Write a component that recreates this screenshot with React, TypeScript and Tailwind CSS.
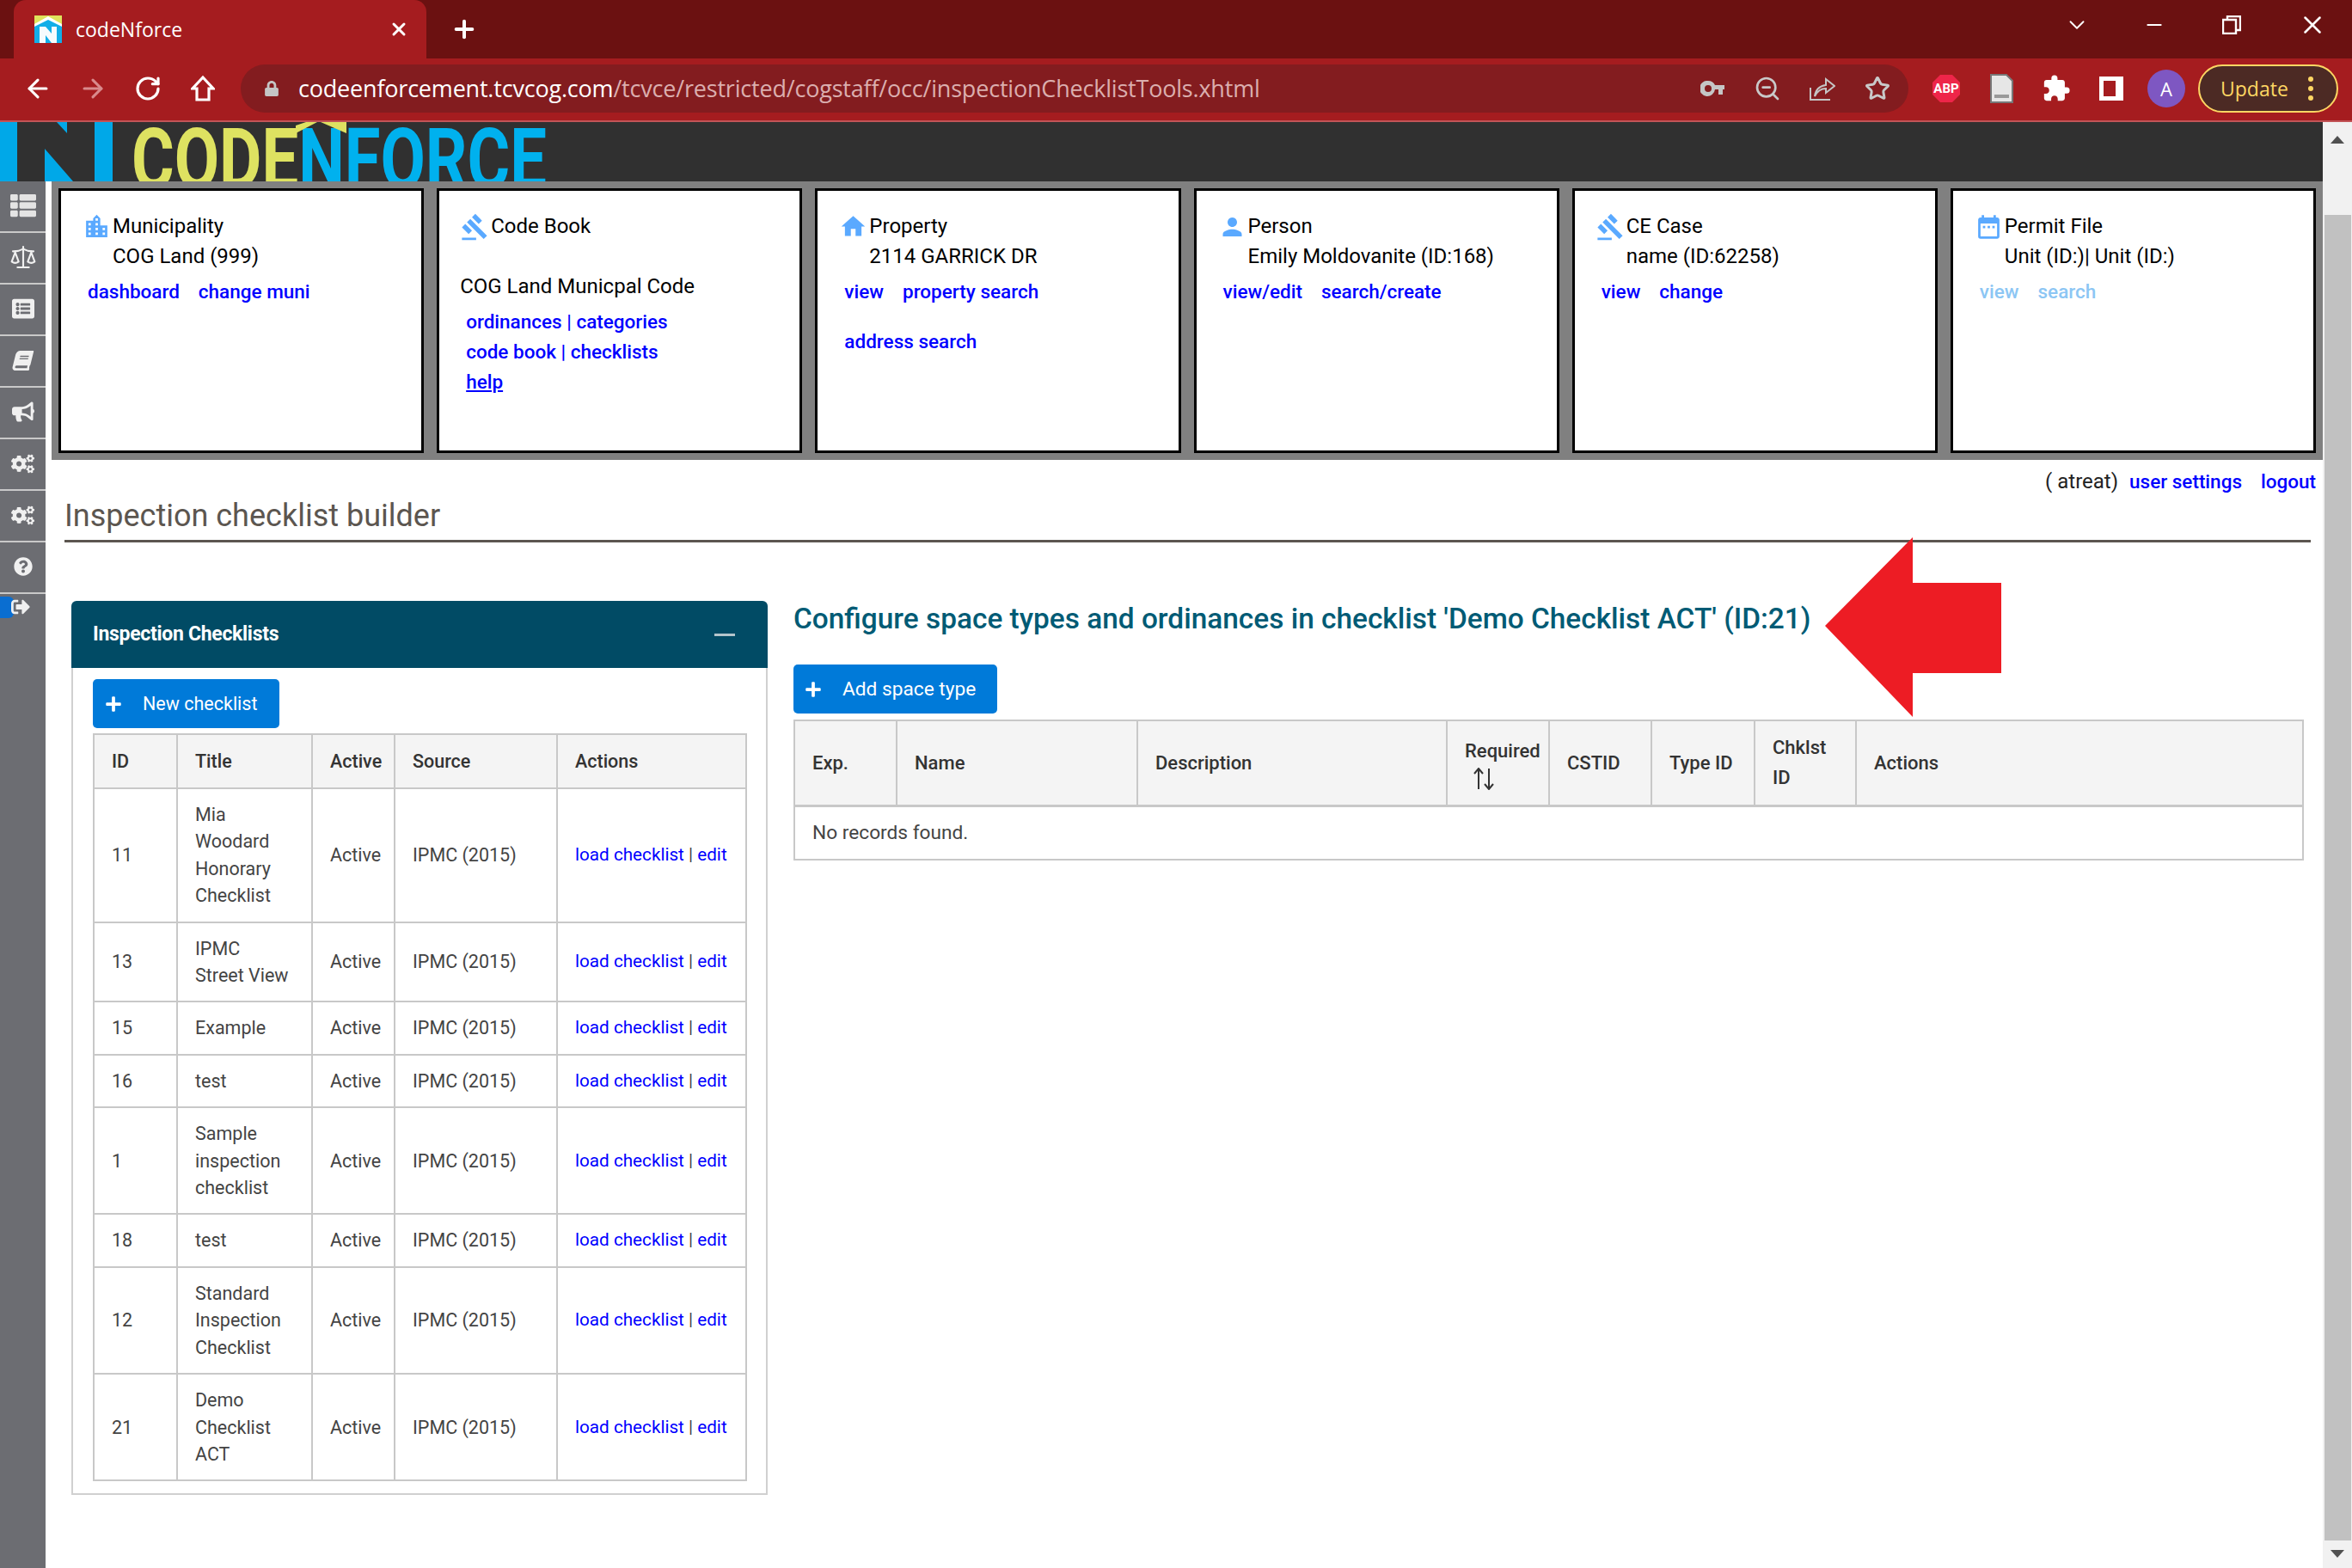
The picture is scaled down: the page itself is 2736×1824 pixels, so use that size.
import { ArrowLeft, ArrowRight, ChevronDown, Minus, Plus, RotateCw, Scale, Star, X, ZoomOut } from "lucide-react";
import {
    FaBook,
    FaBullhorn,
    FaCogs,
    FaListAlt,
    FaLock,
    FaPlus,
    FaQuestionCircle,
    FaSignOutAlt,
    FaThList,
} from "react-icons/fa";
import { MdDateRange, MdExtension, MdGavel, MdHome, MdLocationCity, MdPerson } from "react-icons/md";
import type { ReactNode } from "react";

const rows = [
    { id: "11", title: ["Mia", "Woodard", "Honorary", "Checklist"] },
    { id: "13", title: ["IPMC", "Street View"] },
    { id: "15", title: ["Example"] },
    { id: "16", title: ["test"] },
    { id: "1", title: ["Sample", "inspection", "checklist"] },
    { id: "18", title: ["test"] },
    { id: "12", title: ["Standard", "Inspection", "Checklist"] },
    { id: "21", title: ["Demo", "Checklist", "ACT"] },
];

const sideIcons = [
    <FaThList size={30} className="text-[#e4e4e4]" />,
    <Scale size={32} strokeWidth={1.6} />,
    <FaListAlt size={26} />,
    <FaBook size={23} className="-skew-x-[14deg]" />,
    <FaBullhorn size={26} />,
    <FaCogs size={27} />,
    <FaCogs size={27} />,
    <FaQuestionCircle size={22} />,
];

const Favicon = () => (
    <svg width="32" height="32" viewBox="0 0 32 32">
        <rect width="32" height="11" fill="#dfe35c" />
        <path d="M0 10 16 1 32 10V14H0Z" fill="#fff" />
        <path d="M0 13 16 5 32 13V32H0Z" fill="#12aee8" />
        <path d="M6 13H13L20 21V13H26V32H20L13 23V32H6Z" fill="#f6fbfd" />
    </svg>
);

const LogoMark = () => (
    <svg width="131" height="69" viewBox="0 0 131 69" className="shrink-0">
        <path d="M0 0H20V69H0ZM110 0H131V69H110ZM66 0H78V13ZM52 31 85 69H52Z" fill="#00a8e8" />
    </svg>
);

const Header = () => (
    <div className="relative h-[69px] overflow-hidden bg-[#303030]">
        <div className="flex h-full">
            <LogoMark />
            <div className="ml-[22px] mt-[-6px] origin-left scale-x-[0.775] whitespace-nowrap font-[Roboto,sans-serif] text-[98px] font-bold leading-[100px]">
                <span className="text-[#dee261]">CODE</span>
                <span className="text-[#00b1ee]">NFORCE</span>
            </div>
        </div>
        <svg width="59" height="14" viewBox="0 0 59 14" className="absolute left-[344px] top-0">
            <path d="M0 13V4L12 0H25ZM29 0H59V13Z" fill="#dee261" />
        </svg>
    </div>
);

const Sidebar = () => (
    <div className="flex w-[53px] shrink-0 flex-col bg-[#6c6d72] text-[#f0f0f0]">
        {sideIcons.map((icon, i) => (
            <div key={i} className="flex h-[60px] items-center justify-center border-b-2 border-[#c9c9c9] pb-[2px]">
                {icon}
            </div>
        ))}
        <div className="relative h-[30px]">
            <div className="absolute left-0 top-[3px] h-[25px] w-[16px] rounded-r-[6px] bg-[#0a6ed1]" />
            <FaSignOutAlt size={22} className="absolute left-[13px] top-[4px]" />
        </div>
    </div>
);

const CardTitle = ({ icon, title, sub }: { icon: ReactNode; title: string; sub?: string }) => (
    <>
        <div className="flex items-center">
            <div className="flex h-[35px] w-[33px] shrink-0 items-center justify-center text-[#5aa9ff]">{icon}</div>
            <span className="ml-[2px]">{title}</span>
        </div>
        {sub && <div className="ml-[35px]">{sub}</div>}
    </>
);

const NavLinks = ({ items, pale, indent = "ml-[6px]" }: { items: string[]; pale?: boolean; indent?: string }) => (
    <div className={`${indent} mt-[6px] flex gap-[22px] text-[22.5px] font-medium ${pale ? "text-[#8cc6f4]" : "text-[#0000ff]"}`}>
        {items.map((item) => (
            <span key={item}>{item}</span>
        ))}
    </div>
);

const Card = ({ children }: { children: ReactNode }) => (
    <div className="flex-1 border-[3px] border-black bg-white pl-[25px] pt-[24px]">{children}</div>
);

const CardStrip = () => (
    <div className="flex h-[324px] gap-[15px] bg-[#808080] p-[8px] font-[Roboto,sans-serif] text-[24px] leading-[35px] text-black">
        <Card>
            <CardTitle icon={<MdLocationCity size={33} />} title="Municipality" sub="COG Land (999)" />
            <NavLinks items={["dashboard", "change muni"]} />
        </Card>
        <Card>
            <CardTitle icon={<MdGavel size={36} />} title="Code Book" />
            <div className="ml-[-1px] mt-[35px]">COG Land Municpal Code</div>
            <NavLinks items={["ordinances | categories"]} indent="ml-[6px]" />
            <div className="ml-[6px] text-[22.5px] font-medium text-[#0000ff]">code book | checklists</div>
            <div className="ml-[6px] text-[22.5px] font-medium text-[#0000ff] underline">help</div>
        </Card>
        <Card>
            <CardTitle icon={<MdHome size={35} />} title="Property" sub="2114 GARRICK DR" />
            <NavLinks items={["view", "property search"]} />
            <div className="ml-[6px] mt-[23px] text-[22.5px] font-medium text-[#0000ff]">address search</div>
        </Card>
        <Card>
            <CardTitle icon={<MdPerson size={36} />} title="Person" sub="Emily Moldovanite (ID:168)" />
            <NavLinks items={["view/edit", "search/create"]} />
        </Card>
        <Card>
            <CardTitle icon={<MdGavel size={38} />} title="CE Case" sub="name (ID:62258)" />
            <NavLinks items={["view", "change"]} />
        </Card>
        <Card>
            <CardTitle icon={<MdDateRange size={36} />} title="Permit File" sub="Unit (ID:)| Unit (ID:)" />
            <NavLinks items={["view", "search"]} pale />
        </Card>
    </div>
);

const PrimaryButton = ({ label, width, textClass, plusLeft }: { label: string; width: string; textClass: string; plusLeft: string }) => (
    <button className={`flex h-[57px] ${width} items-center rounded-[5px] bg-[#007ad9] text-white ${plusLeft}`}>
        <FaPlus size={20} className="shrink-0" />
        <span className={`ml-[24px] ${textClass}`}>{label}</span>
    </button>
);

const ChecklistPanel = () => (
    <div className="h-[1039px] w-[810px] shrink-0">
        <div className="flex h-[78px] items-center justify-between rounded-t-[6px] bg-[#014b65] pl-[25px] pr-[38px] text-[23px] font-bold text-white">
            <span className="tracking-[-0.3px]">Inspection Checklists</span>
            <span className="h-[3px] w-[24px] bg-[#b4c5cc]" />
        </div>
        <div className="border-2 border-t-0 border-[#d0d0d0] pb-[14px] pl-[23px] pr-[24px] pt-[13px]">
            <PrimaryButton label="New checklist" width="w-[217px]" textClass="text-[21.5px]" plusLeft="pl-[14px]" />
            <table className="mt-[6px] w-[759px] table-fixed border-collapse border-2 border-[#c8c8c8] text-[21.5px] leading-[31.4px]">
                <colgroup>
                    <col className="w-[97px]" />
                    <col className="w-[157px]" />
                    <col className="w-[96px]" />
                    <col className="w-[189px]" />
                    <col className="w-[220px]" />
                </colgroup>
                <thead>
                    <tr className="h-[63px] bg-[#f4f4f4] font-medium text-[#333]">
                        {["ID", "Title", "Active", "Source", "Actions"].map((h) => (
                            <th key={h} className="border-2 border-[#c8c8c8] pl-[20px] text-left font-medium">
                                {h}
                            </th>
                        ))}
                    </tr>
                </thead>
                <tbody className="text-[#444]">
                    {rows.map((row) => (
                        <tr key={row.id}>
                            <td className="border-2 border-[#c8c8c8] pl-[20px]">{row.id}</td>
                            <td className="border-2 border-[#c8c8c8] py-[14px] pl-[20px]">
                                {row.title.map((line) => (
                                    <div key={line}>{line}</div>
                                ))}
                            </td>
                            <td className="border-2 border-[#c8c8c8] pl-[20px]">Active</td>
                            <td className="border-2 border-[#c8c8c8] pl-[20px]">IPMC (2015)</td>
                            <td className="whitespace-nowrap border-2 border-[#c8c8c8] pl-[20px] text-[20.7px]">
                                <span className="text-[#0000ff]">load checklist</span> | <span className="text-[#0000ff]">edit</span>
                            </td>
                        </tr>
                    ))}
                </tbody>
            </table>
        </div>
    </div>
);

const SortIcon = () => (
    <svg width="28" height="26" viewBox="0 0 28 26" fill="none" stroke="#333" strokeWidth="2">
        <path d="M8 25V2M3 7 8 1 13 7M20 1V24M15 19 20 25 25 19" />
    </svg>
);

const SpaceTypes = () => (
    <div className="relative w-[1757px] shrink-0">
        <h2 className="h-[42px] whitespace-nowrap text-[33.4px] font-medium leading-[42px] text-[#005b75]">
            Configure space types and ordinances in checklist 'Demo Checklist ACT' (ID:21)
        </h2>
        <div className="mt-[32px]">
            <PrimaryButton label="Add space type" width="w-[237px]" textClass="text-[22.7px]" plusLeft="pl-[13px]" />
        </div>
        <table className="mt-[7px] w-full table-fixed border-collapse border-2 border-[#c8c8c8] leading-[35px]">
            <colgroup>
                <col className="w-[119px]" />
                <col className="w-[280px]" />
                <col className="w-[360px]" />
                <col className="w-[119px]" />
                <col className="w-[119px]" />
                <col className="w-[120px]" />
                <col className="w-[118px]" />
                <col />
            </colgroup>
            <thead>
                <tr className="h-[99px] bg-[#f4f4f4] text-left text-[#333]">
                    {["Exp.", "Name", "Description"].map((h) => (
                        <th key={h} className="border-2 border-b-[3px] border-[#c8c8c8] pl-[20px] font-medium">
                            {h}
                        </th>
                    ))}
                    <th className="border-2 border-b-[3px] border-[#c8c8c8] pl-[20px] font-medium">
                        <div className="whitespace-nowrap">Required</div>
                        <div className="mt-[2px] h-[26px] pl-[8px]">
                            <SortIcon />
                        </div>
                    </th>
                    {["CSTID", "Type ID"].map((h) => (
                        <th key={h} className="border-2 border-b-[3px] border-[#c8c8c8] pl-[20px] font-medium">
                            {h}
                        </th>
                    ))}
                    <th className="border-2 border-b-[3px] border-[#c8c8c8] pl-[20px] font-medium">
                        Chklst
                        <br />
                        ID
                    </th>
                    <th className="border-2 border-b-[3px] border-[#c8c8c8] pl-[20px] font-medium">Actions</th>
                </tr>
            </thead>
            <tbody>
                <tr className="h-[63px] text-[22.7px] text-[#444]">
                    <td colSpan={8} className="pl-[20px]">
                        No records found.
                    </td>
                </tr>
            </tbody>
        </table>
        <svg width="206" height="210" viewBox="0 0 206 210" className="absolute left-[1200px] top-[-74px]">
            <path d="M102 0V53H205V158H102V209L0 103Z" fill="#ed1c24" />
        </svg>
    </div>
);

const Content = () => (
    <div className="min-w-0 flex-1 bg-white">
        <CardStrip />
        <div className="flex h-[43px] items-end justify-end gap-[22px] pr-[8px] font-[Roboto,sans-serif] text-[24px] leading-[35px]">
            <span className="mr-[-9px] text-[#222]">( atreat)</span>
            <span className="text-[22.5px] font-medium text-[#0000ff]">user settings</span>
            <span className="text-[22.5px] font-medium text-[#0000ff]">logout</span>
        </div>
        <div className="ml-[15px] mr-[14px] h-[53px] border-b-[3px] border-[#5c5650] text-[36px] leading-[44px] text-[#5c5650]">
            Inspection checklist builder
        </div>
        <div className="ml-[23px] mt-[68px] flex gap-[30px] font-[Roboto,sans-serif] text-[22px] leading-[31.5px]">
            <ChecklistPanel />
            <SpaceTypes />
        </div>
    </div>
);

const Scrollbar = () => (
    <div className="flex w-[34px] shrink-0 flex-col items-center bg-[#f1f1f1]">
        <div className="mt-[16px] h-0 w-0 border-x-[8px] border-b-[9px] border-x-transparent border-b-[#505050]" />
        <div className="mt-[83px] h-[1542px] w-[31px] bg-[#c1c1c1]" />
        <div className="mt-[11px] h-0 w-0 border-x-[8px] border-t-[9px] border-x-transparent border-t-[#505050]" />
    </div>
);

const ToolIcon = ({ children, className = "" }: { children: ReactNode; className?: string }) => (
    <div className={`flex h-[64px] w-[64px] shrink-0 items-center justify-center ${className}`}>{children}</div>
);

const TabStrip = () => (
    <div className="flex h-[68px] bg-[#6b1111] text-white">
        <div className="ml-[16px] flex w-[480px] items-center rounded-t-[14px] bg-[#a51c1f] pl-[24px]">
            <Favicon />
            <span className="ml-[16px] font-['Open_Sans',sans-serif] text-[23px]">codeNforce</span>
            <X size={24} strokeWidth={3} className="ml-auto mr-[20px]" />
        </div>
        <Plus size={32} strokeWidth={3} className="ml-[28px] mt-[18px]" />
        <div className="ml-auto flex h-[58px] items-center">
            <ChevronDown size={30} strokeWidth={1.5} className="mr-[62px]" />
            <Minus size={26} strokeWidth={2} className="mr-[66px]" />
            <svg width="22" height="22" viewBox="0 0 22 22" fill="none" stroke="#fff" strokeWidth="2.4" className="mr-[66px]">
                <path d="M6 5V1H21V17H16M1 5H16V21H1Z" />
            </svg>
            <X size={34} strokeWidth={1.8} className="mr-[29px]" />
        </div>
    </div>
);

const Toolbar = () => (
    <div className="flex h-[74px] items-center border-b-2 border-[#c25457] bg-[#a51c1f] pb-[2px] pl-[12px] text-white">
        <ToolIcon>
            <ArrowLeft size={34} strokeWidth={2.2} />
        </ToolIcon>
        <ToolIcon className="text-[#d98a8c]">
            <ArrowRight size={34} strokeWidth={2.2} />
        </ToolIcon>
        <ToolIcon>
            <RotateCw size={32} strokeWidth={2.4} />
        </ToolIcon>
        <ToolIcon>
            <svg width="28" height="32" viewBox="0 0 28 32" fill="none" stroke="#fff" strokeWidth="3.2">
                <path d="M14 3 26 16H21V29H7V16H2Z" />
            </svg>
        </ToolIcon>
        <div className="ml-[12px] flex h-[56px] w-[1940px] items-center rounded-full bg-[#831c1f] pl-[27px] font-['Open_Sans',sans-serif] text-[27px]">
            <FaLock size={18} className="text-[#c5c5c5]" />
            <span className="ml-[22px] whitespace-nowrap tracking-[-0.2px]">
                codeenforcement.tcvcog.com<span className="text-[#dbaeae]">/tcvce/restricted/cogstaff/occ/inspectionChecklistTools.xhtml</span>
            </span>
            <div className="ml-auto mr-[4px] flex text-[#c9c9c9]">
                <ToolIcon>
                    <svg width="28" height="18" viewBox="0 0 28 18" fill="#c5c5c5" fillRule="evenodd">
                        <path d="M9 0A9 9 0 0 1 17 5H28V10H26V16H21V10H17A9 9 0 1 1 9 0ZM9 5A4 4 0 1 0 9 13 4 4 0 0 0 9 5Z" />
                    </svg>
                </ToolIcon>
                <ToolIcon>
                    <ZoomOut size={32} strokeWidth={2} />
                </ToolIcon>
                <ToolIcon>
                    <svg width="30" height="28" viewBox="0 0 30 28" fill="none" stroke="#c5c5c5" strokeWidth="2">
                        <path d="M1 13V27H24" />
                        <path d="M6 23C7 15 12 11 19 10V3L29 11 19 19V14C14 14 9 17 6 23Z" />
                    </svg>
                </ToolIcon>
                <ToolIcon>
                    <Star size={30} strokeWidth={2.4} />
                </ToolIcon>
            </div>
        </div>
        <ToolIcon className="ml-[12px]">
            <div className="relative flex h-[32px] w-[32px] items-center justify-center font-[Roboto,sans-serif] text-[15px] font-bold">
                <svg width="32" height="32" viewBox="0 0 32 32" className="absolute inset-0">
                    <path d="M9 0H23L32 9V23L23 32H9L0 23V9Z" fill="#ee2549" />
                </svg>
                <span className="relative">ABP</span>
            </div>
        </ToolIcon>
        <ToolIcon>
            <svg width="28" height="34" viewBox="0 0 28 34">
                <path d="M2 1H20L27 8V33H2Z" fill="#e6e6e6" stroke="#777" strokeWidth="2" />
                <rect x="6" y="24" width="17" height="4" fill="#999" />
            </svg>
        </ToolIcon>
        <ToolIcon>
            <MdExtension size={34} />
        </ToolIcon>
        <ToolIcon>
            <svg width="28" height="28" viewBox="0 0 28 28" fill="#fff" fillRule="evenodd">
                <path d="M0 0H28V28H0ZM5 5V23H19V5Z" />
            </svg>
        </ToolIcon>
        <ToolIcon>
            <div className="flex h-[44px] w-[44px] items-center justify-center rounded-full bg-[#7e57c2] font-['Open_Sans',sans-serif] text-[22px]">
                A
            </div>
        </ToolIcon>
        <div className="ml-[5px] flex h-[56px] w-[163px] items-center rounded-full border-2 border-[#fdd663] bg-[#4c2a24] pl-[24px] font-['Open_Sans',sans-serif] text-[23px] text-[#fdd663]">
            Update
            <div className="ml-[23px] flex flex-col gap-[5px]">
                <span className="h-[6px] w-[6px] rounded-full bg-[#fdd663]" />
                <span className="h-[6px] w-[6px] rounded-full bg-[#fdd663]" />
                <span className="h-[6px] w-[6px] rounded-full bg-[#fdd663]" />
            </div>
        </div>
    </div>
);

const App = () => (
    <div className="flex h-[1824px] w-[2736px] flex-col overflow-hidden bg-white font-[Roboto,sans-serif]">
        <TabStrip />
        <Toolbar />
        <div className="flex min-h-0 flex-1">
            <div className="flex min-w-0 flex-1 flex-col">
                <Header />
                <div className="flex min-h-0 flex-1">
                    <div className="flex w-[60px] shrink-0 bg-white">
                        <Sidebar />
                    </div>
                    <Content />
                </div>
            </div>
            <Scrollbar />
        </div>
    </div>
);

export default App;
